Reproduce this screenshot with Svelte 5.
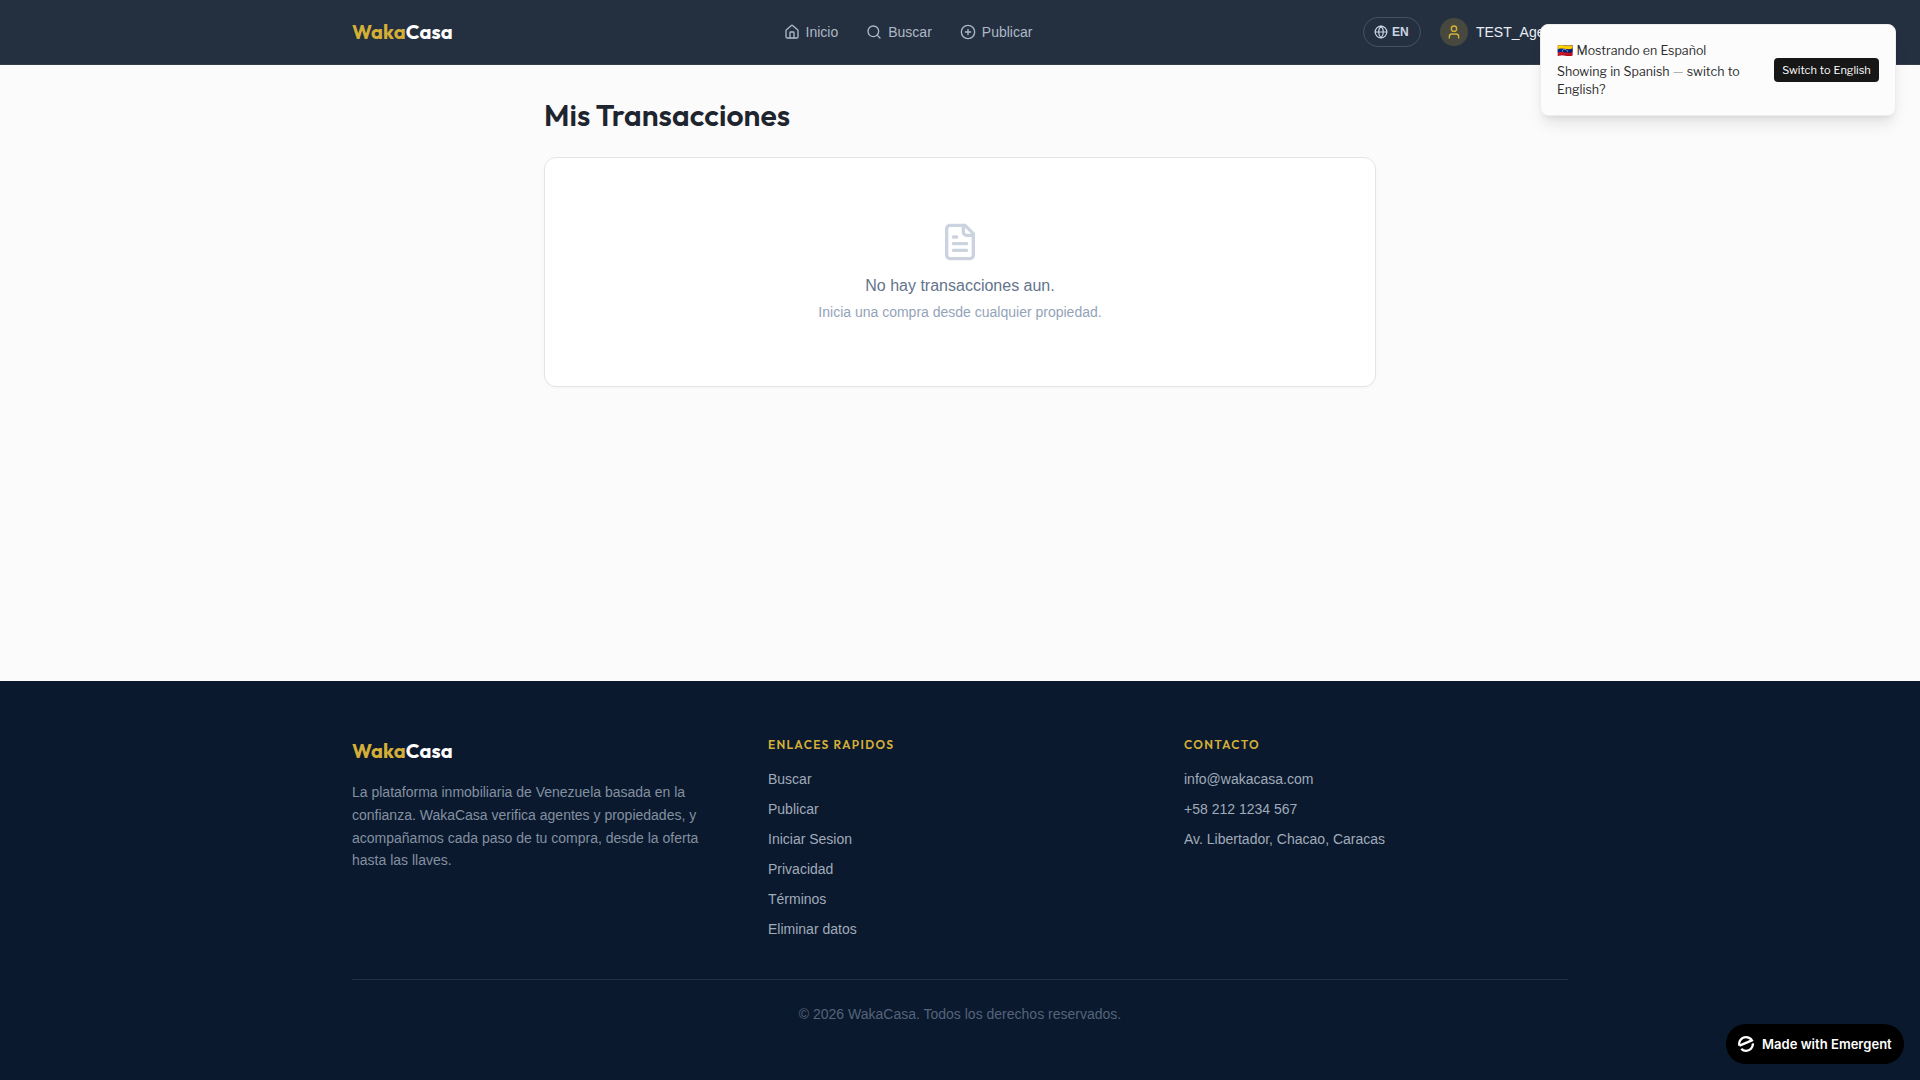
<script>
  const navItems = [
    { label: 'Inicio', icon: 'home' },
    { label: 'Buscar', icon: 'search' },
    { label: 'Publicar', icon: 'plus' }
  ];
  const quickLinks = ['Buscar', 'Publicar', 'Iniciar Sesion', 'Privacidad', 'Términos', 'Eliminar datos'];
  const contact = ['info@wakacasa.com', '+58 212 1234 567', 'Av. Libertador, Chacao, Caracas'];
</script>

{#snippet icon(name, size)}
  <svg class="icon" width={size} height={size} viewBox="0 0 24 24">
    {#if name === 'home'}
      <path d="M15 21v-8a1 1 0 0 0-1-1h-4a1 1 0 0 0-1 1v8" />
      <path d="M3 10a2 2 0 0 1 .709-1.528l7-5.999a2 2 0 0 1 2.582 0l7 5.999A2 2 0 0 1 21 10v9a2 2 0 0 1-2 2H5a2 2 0 0 1-2-2z" />
    {:else if name === 'search'}
      <circle cx="11" cy="11" r="8" />
      <path d="m21 21-4.3-4.3" />
    {:else if name === 'plus'}
      <circle cx="12" cy="12" r="10" />
      <path d="M8 12h8M12 8v8" />
    {:else if name === 'globe'}
      <circle cx="12" cy="12" r="10" />
      <path d="M12 2a14.5 14.5 0 0 0 0 20 14.5 14.5 0 0 0 0-20M2 12h20" />
    {:else if name === 'user'}
      <path d="M19 21v-2a4 4 0 0 0-4-4H9a4 4 0 0 0-4 4v2" />
      <circle cx="12" cy="7" r="4" />
    {:else if name === 'file'}
      <path d="M15 2H6a2 2 0 0 0-2 2v16a2 2 0 0 0 2 2h12a2 2 0 0 0 2-2V7Z" />
      <path d="M14 2v4a2 2 0 0 0 2 2h4M10 9H8M16 13H8M16 17H8" />
    {/if}
  </svg>
{/snippet}

{#snippet logo()}
  <div class="logo"><span class="gold">Waka</span><span class="white">Casa</span></div>
{/snippet}

<div class="page">
  <header>
    <div class="container bar">
      {@render logo()}
      <nav>
        {#each navItems as item}
          <a>{@render icon(item.icon, 16)}<span>{item.label}</span></a>
        {/each}
      </nav>
      <div class="account">
        <button class="lang">{@render icon('globe', 14)}<span>EN</span></button>
        <div class="user">
          <span class="avatar">{@render icon('user', 16)}</span>
          <span class="name">TEST_Age</span>
        </div>
      </div>
    </div>
  </header>

  <main>
    <h1><span>Mis Transacciones</span></h1>
    <section class="card">
      {@render icon('file', 40)}
      <p class="empty">No hay transacciones aun.</p>
      <p class="hint">Inicia una compra desde cualquier propiedad.</p>
    </section>
  </main>

  <footer>
    <div class="container">
      <div class="columns">
        <div>
          {@render logo()}
          <p class="about">La plataforma inmobiliaria de Venezuela basada en la confianza. WakaCasa verifica agentes y propiedades, y acompañamos cada paso de tu compra, desde la oferta hasta las llaves.</p>
        </div>
        <div>
          <h4>ENLACES RAPIDOS</h4>
          <ul>{#each quickLinks as link}<li>{link}</li>{/each}</ul>
        </div>
        <div>
          <h4>CONTACTO</h4>
          <ul>{#each contact as line}<li>{line}</li>{/each}</ul>
        </div>
      </div>
      <p class="copyright">© 2026 WakaCasa. Todos los derechos reservados.</p>
    </div>
  </footer>
</div>

<aside class="toast">
  <div class="message">
    <div class="title"><span class="flag">🇻🇪</span> Mostrando en Español</div>
    <div class="detail">Showing in Spanish <span class="dash">—</span> switch to English?</div>
  </div>
  <button class="switch">Switch to English</button>
</aside>

<div class="badge">
  <svg width="16" height="16" viewBox="0 0 16 16" fill="none" stroke="#fff" stroke-width="2.3">
    <path d="M1.5 9.6C.2 5.2 3.6 1.2 8 1.2c2.6 0 4.7 1.3 5.9 3.2L1.5 9.6" />
    <path d="M14.9 7.4C15 11.7 12 14.8 8 14.8c-1.9 0-3.5-.7-4.7-1.9" />
  </svg>
  <span>Made with Emergent</span>
</div>

<style>
  :global(body) {
    margin: 0;
    background: #fbfbfb;
    font-family: "Liberation Sans", Arial, sans-serif;
    font-size: 14px;
    line-height: 20px;
  }
  .page { min-height: 1080px; display: flex; flex-direction: column; }
  .container { box-sizing: border-box; width: 1280px; margin: 0 auto; padding: 0 32px; }
  .icon { display: block; flex: none; fill: none; stroke: currentColor; stroke-width: 2; stroke-linecap: round; stroke-linejoin: round; }
  p, h1, h4, ul { margin: 0; padding: 0; }
  button { border: 0; font-family: inherit; }

  header { height: 64px; background: #243040; border-bottom: 1px solid #353f4c; }
  .bar { height: 64px; display: flex; align-items: center; justify-content: space-between; }
  .logo { font: 700 20px/28px Outfit, Lato, sans-serif; letter-spacing: .15px; white-space: nowrap; width: 100px; }
  .gold { color: #d4af37; }
  .white { color: #fff; }
  nav { display: flex; gap: 28px; }
  nav a { display: flex; align-items: center; gap: 6px; color: #aeb8c6; }
  .account { display: flex; align-items: center; gap: 19px; width: 205px; margin-left: -1px; }
  .lang { box-sizing: border-box; display: flex; align-items: center; gap: 4px; height: 30px; width: 58px; padding: 0 10px; border: 1px solid #475261; border-radius: 15px; background: none; color: #cbd5e1; font-size: 12px; font-weight: 700; }
  .user { display: flex; align-items: center; gap: 8px; }
  .avatar { display: grid; place-items: center; width: 28px; height: 28px; border-radius: 50%; background: #47493e; color: #d4af37; }
  .name { color: #e8edf4; }

  main { box-sizing: border-box; width: 896px; min-height: 616px; margin: 0 auto; padding: 32px; }
  h1 { font: 600 30px/36px Outfit, Lato, sans-serif; letter-spacing: .06px; color: #1e252e; margin-bottom: 24px; white-space: nowrap; }
  .card { display: flex; flex-direction: column; align-items: center; padding: 64px 0; background: #fff; border: 1px solid #e2e5e9; border-radius: 12px; box-shadow: 0 1px 2px rgba(0, 0, 0, .03); }
  .card .icon { color: #cbd3e1; }
  .empty { margin-top: 12px; font-size: 16px; line-height: 24px; color: #64748b; }
  .hint { margin-top: 4px; color: #94a3b8; }

  footer { box-sizing: border-box; flex: 1; padding: 56px 0; background: #0a192d; }
  .columns { display: grid; grid-template-columns: repeat(3, 1fr); gap: 32px; }
  .about { margin-top: 16px; width: 360px; line-height: 22.75px; color: #8490a1; }
  h4 { font: 600 12px/16px Outfit, Lato, sans-serif; letter-spacing: 1.33px; color: #d4af37; margin-bottom: 16px; }
  ul { list-style: none; display: flex; flex-direction: column; gap: 10px; color: #a0abba; }
  .copyright { margin-top: 40px; padding-top: 24px; border-top: 1px solid #232f43; text-align: center; color: #56637a; }

  .toast { position: absolute; top: 24px; left: 1540px; box-sizing: border-box; width: 356px; height: 92px; display: flex; align-items: center; justify-content: space-between; padding: 0 16px 1px; border: 1px solid #ededed; border-radius: 8px; background: #fcfcfc; box-shadow: 0 10px 15px -3px rgba(0, 0, 0, .1), 0 4px 6px -4px rgba(0, 0, 0, .1); color: #2c2c2c; font: 400 12.4px/18px "Libre Franklin", "Public Sans", "Liberation Sans", "Noto Color Emoji", sans-serif; word-spacing: .6px; }
  .message { width: 190px; }
  .title { line-height: 19px; margin-bottom: 3px; white-space: nowrap; }
  .flag { font-size: 13px; }
  .dash { font-weight: 300; color: #777; }
  .detail { line-height: 18px; }
  .switch { flex: none; box-sizing: border-box; width: 105px; height: 24px; margin-top: 1px; padding: 0; border-radius: 4px; background: #171717; color: #fff; font-size: 11px; word-spacing: .6px; text-align: center; white-space: nowrap; }

  .badge { position: absolute; left: 1726px; top: 1024px; box-sizing: border-box; width: 178px; height: 40px; display: flex; align-items: center; gap: 8px; padding-left: 12px; border-radius: 20px; background: #000; color: #fff; font: 600 13px/20px Inter, sans-serif; letter-spacing: .03px; white-space: nowrap; }
</style>
